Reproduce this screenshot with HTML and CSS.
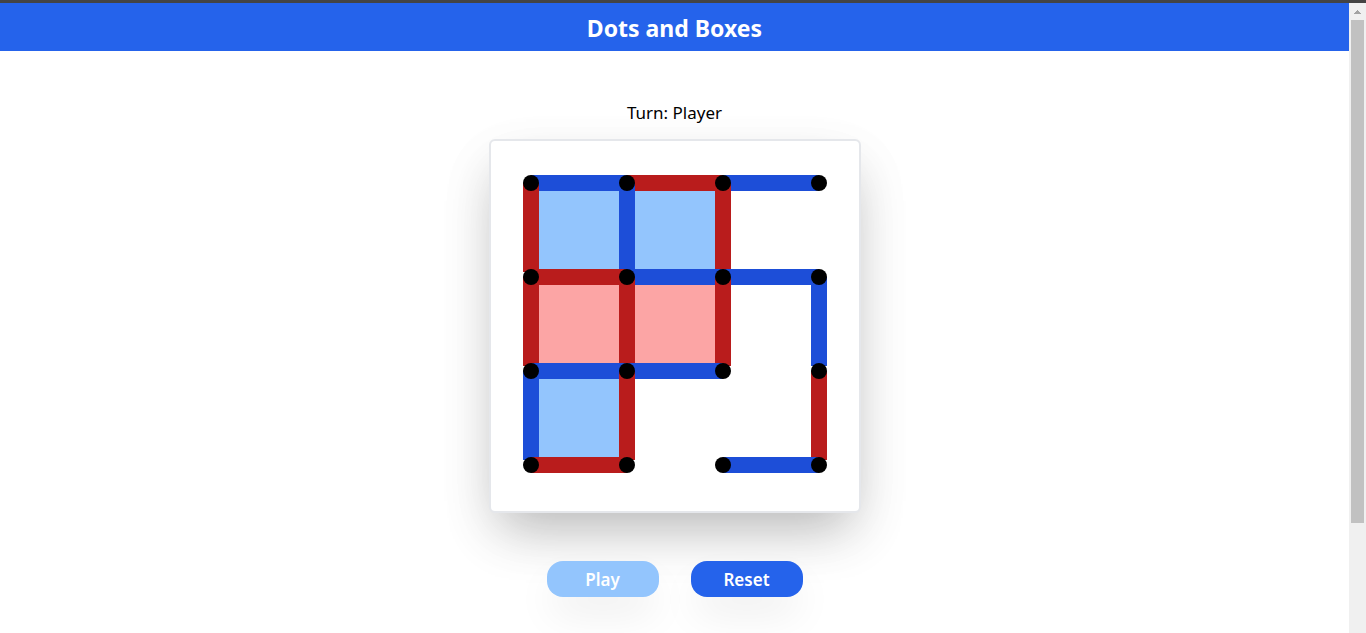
FILE: index.html
```html
<!DOCTYPE html>
<html lang="en">
<head>
<meta charset="utf-8">
<meta name="viewport" content="width=device-width, initial-scale=1">
<title>Dots and Boxes</title>
<link rel="stylesheet" href="styles.css">
</head>
<body>
<div class="window">
  <div class="page">
    <header class="header"><h1 class="title">Dots and Boxes</h1></header>
    <main class="main">
      <p class="turn">Turn: Player</p>
      <div class="board">
        <span class="dot"></span><button class="edge h blue"></button><span class="dot"></span><button class="edge h red"></button><span class="dot"></span><button class="edge h blue"></button><span class="dot"></span>

        <button class="edge v red"></button><span class="box box-blue"></span><button class="edge v blue"></button><span class="box box-blue"></span><button class="edge v red"></button><span class="box"></span><button class="edge v"></button>

        <span class="dot"></span><button class="edge h red"></button><span class="dot"></span><button class="edge h blue"></button><span class="dot"></span><button class="edge h blue"></button><span class="dot"></span>

        <button class="edge v red"></button><span class="box box-red"></span><button class="edge v red"></button><span class="box box-red"></span><button class="edge v red"></button><span class="box"></span><button class="edge v blue"></button>

        <span class="dot"></span><button class="edge h blue"></button><span class="dot"></span><button class="edge h blue"></button><span class="dot"></span><button class="edge h"></button><span class="dot"></span>

        <button class="edge v blue"></button><span class="box box-blue"></span><button class="edge v red"></button><span class="box"></span><button class="edge v"></button><span class="box"></span><button class="edge v red"></button>

        <span class="dot"></span><button class="edge h red"></button><span class="dot"></span><button class="edge h"></button><span class="dot"></span><button class="edge h blue"></button><span class="dot"></span>
      </div>
      <div class="actions">
        <button class="action" disabled>Play</button>
        <button class="action">Reset</button>
      </div>
    </main>
  </div>
  <div class="scrollbar">
    <svg class="arrow" viewBox="0 0 17 17" aria-hidden="true"><path d="M5 11V10H6V9H7V8H8V7H9V8H10V9H11V10H12V11Z" fill="#a3a3a3"/></svg>
    <div class="track"><div class="thumb"></div></div>
  </div>
</div>
</body>
</html>
```
FILE: styles.css
```css
* {
  box-sizing: border-box;
}

body {
  margin: 0;
  background: #fff;
  color: #000;
  font-family: "Segoe UI", "Noto Sans", sans-serif;
}

.window {
  display: grid;
  grid-template-columns: 1fr 17px;
  min-height: 100vh;
  border-top: 3px solid #444;
}

.page {
  overflow: hidden;
}

.header {
  display: flex;
  align-items: center;
  justify-content: center;
  height: 48px;
  padding-top: 2px;
  background: #2563eb;
  color: #fff;
}

.title {
  margin: 0;
  font-size: 23px;
  font-weight: 700;
  line-height: 32px;
}

.main {
  display: flex;
  flex-direction: column;
  align-items: center;
  padding-top: 48px;
}

.turn {
  margin: 0 0 12px;
  font-size: 17px;
  font-weight: 400;
  line-height: 28px;
}

.board {
  display: grid;
  grid-template-columns: 16px 80px 16px 80px 16px 80px 16px;
  grid-template-rows: 16px 78px 16px 78px 16px 78px 16px;
  padding: 34px 32px 38px;
  border: 2px solid #e5e7eb;
  border-radius: 6px;
  background: #fff;
  box-shadow: 0 25px 50px -12px rgba(0, 0, 0, 0.25), 0 20px 60px rgba(0, 0, 0, 0.06);
}

.dot {
  z-index: 1;
  border-radius: 50%;
  background: #000;
}

.edge {
  padding: 0;
  border: 0;
  background: transparent;
  cursor: pointer;
}

.h {
  margin: 0 -8px;
}

.v {
  margin: -8px 0 -3px;
}

.blue {
  background: #1d4ed8;
}

.red {
  background: #b91c1c;
}

.box-blue {
  background: #93c5fd;
}

.box-red {
  background: #fca5a5;
}

.actions {
  display: flex;
  gap: 32px;
  margin-top: 48px;
}

.action {
  width: 112px;
  height: 36px;
  padding: 2px 0 0;
  border: 0;
  border-radius: 16px;
  background: #2563eb;
  color: #fff;
  font-family: inherit;
  font-size: 17px;
  font-weight: 600;
  line-height: 28px;
  box-shadow: 0 20px 40px -4px rgba(0, 0, 0, 0.08);
}

.action:disabled {
  background: #93c5fd;
}

.scrollbar {
  display: flex;
  flex-direction: column;
  background: #f0f0f0;
}

.arrow {
  width: 17px;
  height: 17px;
}

.track {
  flex: 1;
  display: flex;
  padding: 0 2px;
}

.thumb {
  width: 100%;
  height: 82%;
  background: #c1c1c1;
}
```
